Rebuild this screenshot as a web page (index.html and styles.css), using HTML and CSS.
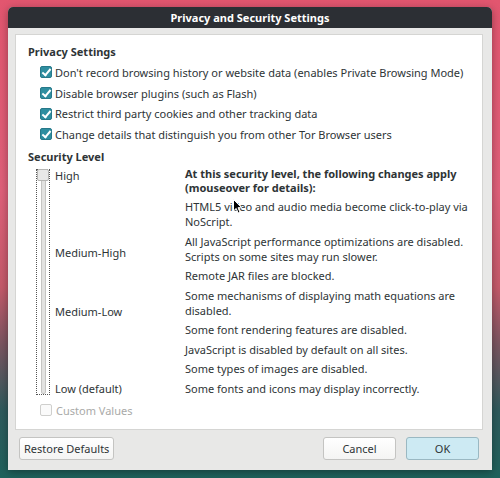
FILE: index.html
```html
<!DOCTYPE html>
<html>
<head>
<meta charset="utf-8">
<link rel="stylesheet" href="styles.css">
</head>
<body>
<div class="window">
  <div class="titlebar">Privacy and Security Settings</div>
  <div class="content">
    <div class="panel">
      <div class="heading">Privacy Settings</div>
      <div class="checks">
        <div class="check-row"><span class="cb on"></span>Don't record browsing history or website data (enables Private Browsing Mode)</div>
        <div class="check-row"><span class="cb on"></span>Disable browser plugins (such as Flash)</div>
        <div class="check-row"><span class="cb on"></span>Restrict third party cookies and other tracking data</div>
        <div class="check-row"><span class="cb on"></span>Change details that distinguish you from other Tor Browser users</div>
      </div>
      <div class="heading sec">Security Level</div>
      <div class="security">
        <div class="slider-area">
          <div class="slider">
            <div class="track"></div>
            <div class="thumb"></div>
          </div>
          <div class="levels">
            <div class="lvl l-high">High</div>
            <div class="lvl l-mh">Medium-High</div>
            <div class="lvl l-ml">Medium-Low</div>
            <div class="lvl l-low">Low (default)</div>
          </div>
        </div>
        <div class="desc">
          <div class="desc-head">At this security level, the following changes apply (mouseover for details):</div>
          <div class="item">HTML5 video and audio media become click-to-play via NoScript.</div>
          <div class="item">All JavaScript performance optimizations are disabled. Scripts on some sites may run slower.</div>
          <div class="item">Remote JAR files are blocked.</div>
          <div class="item">Some mechanisms of displaying math equations are disabled.</div>
          <div class="item">Some font rendering features are disabled.</div>
          <div class="item">JavaScript is disabled by default on all sites.</div>
          <div class="item">Some types of images are disabled.</div>
          <div class="item">Some fonts and icons may display incorrectly.</div>
        </div>
      </div>
      <div class="custom"><span class="cb off"></span>Custom Values</div>
    </div>
    <div class="footer">
      <button class="btn">Restore Defaults</button>
      <div class="spacer"></div>
      <button class="btn cancel">Cancel</button>
      <button class="btn ok">OK</button>
    </div>
  </div>
</div>
<svg class="cursor" width="10" height="15" viewBox="0 0 10 15"><path d="M0.5 0.5 L0.5 12 L3.2 9.4 L5.2 14 L7 13.2 L5 8.7 L8.6 8.7 Z" fill="#000" stroke="#fff" stroke-width="1"/></svg>
</body>
</html>
```

FILE: styles.css
```css
html, body {
  margin: 0;
  padding: 0;
}
body {
  width: 500px;
  height: 478px;
  overflow: hidden;
  position: relative;
  background: linear-gradient(to bottom, #e2566f 0%, #df607a 40%, #c45a6a 60%, #7a5560 72%, #2e5a5c 86%, #1f625c 100%);
  font-family: "Noto Sans", "Open Sans", sans-serif;
  font-size: 11px;
  color: #2e3436;
}
.window {
  position: absolute;
  left: 8px;
  top: 7px;
  width: 484px;
  height: 463px;
  border-radius: 5px 5px 0 0;
  overflow: hidden;
  background: #e8e8e7;
  box-shadow: 0 2px 8px rgba(0,0,0,0.35);
  display: flex;
  flex-direction: column;
}
.titlebar {
  height: 21px;
  line-height: 21px;
  background: #2c2f34;
  color: #fff;
  font-weight: bold;
  text-align: center;
  font-size: 11px;
}
.content {
  flex: 1;
  padding: 6px 9px 0 7px;
  display: flex;
  flex-direction: column;
}
.panel {
  height: 396px;
  box-sizing: border-box;
  background: #fff;
  border: 1px solid #d5d5d3;
  padding: 9px 0 0 12px;
}
.heading {
  font-weight: bold;
  line-height: 15px;
  height: 15px;
}
.heading.sec {
  margin-top: 4px;
}
.checks {
  margin-top: 3px;
}
.check-row {
  height: 20.7px;
  display: flex;
  align-items: center;
  padding-left: 12px;
}
.cb {
  width: 12px;
  height: 12px;
  box-sizing: border-box;
  border-radius: 2px;
  margin-right: 3px;
  flex: none;
  position: relative;
}
.cb.on {
  background: #2f8ea0;
  border: 1px solid #27798a;
}
.cb.on::after {
  content: "";
  position: absolute;
  left: 3px;
  top: 0px;
  width: 3px;
  height: 7px;
  border: solid #fff;
  border-width: 0 2px 2px 0;
  transform: rotate(40deg);
}
.cb.off {
  border: 1px solid #cfcfcd;
  background: #fafafa;
}
.security {
  display: flex;
  margin-top: 3px;
}
.slider-area {
  display: flex;
  width: 157px;
  flex: none;
}
.slider {
  margin-left: 8px;
  margin-top: 2px;
  width: 14px;
  height: 226px;
  box-sizing: border-box;
  border: 1px dotted #555;
  position: relative;
  display: flex;
  justify-content: center;
}
.track {
  width: 5px;
  height: 100%;
  box-sizing: border-box;
  background: #e2e2e1;
  border: 1px solid #c4c4c2;
  border-radius: 2px;
}
.thumb {
  position: absolute;
  left: 0px;
  top: -1px;
  width: 12px;
  height: 12px;
  box-sizing: border-box;
  background: #e8e8e7;
  border: 1px solid #b5b5b3;
  border-radius: 2px;
}
.levels {
  padding-left: 5px;
  display: flex;
  flex-direction: column;
}
.lvl {
  line-height: 15px;
}
.l-high { margin-top: 1px; }
.l-mh { margin-top: 62px; }
.l-ml { margin-top: 44px; }
.l-low { margin-top: 62px; }
.desc {
  width: 285px;
}
.desc-head {
  font-weight: bold;
  line-height: 14px;
}
.item {
  line-height: 15px;
  margin-top: 4.5px;
}
.custom {
  margin-top: 7px;
  display: flex;
  align-items: center;
  padding-left: 12px;
  color: #a9aaa8;
  line-height: 15px;
}
.custom .cb {
  margin-right: 4px;
}
.footer {
  display: flex;
  align-items: center;
  padding: 7px 4px 0 4px;
}
.spacer {
  flex: 1;
}
.btn {
  font-family: inherit;
  font-size: 11px;
  color: #2e3436;
  height: 23px;
  padding: 0 4px;
  background: linear-gradient(#fff, #f4f4f3);
  border: 1px solid #c4c4c2;
  border-radius: 3px;
}
.btn.cancel {
  width: 73px;
  margin-right: 10px;
}
.btn.ok {
  width: 73px;
  background: #cdeaf3;
  border-color: #9ab8c2;
}
.cursor {
  position: absolute;
  left: 233px;
  top: 199px;
}
```
